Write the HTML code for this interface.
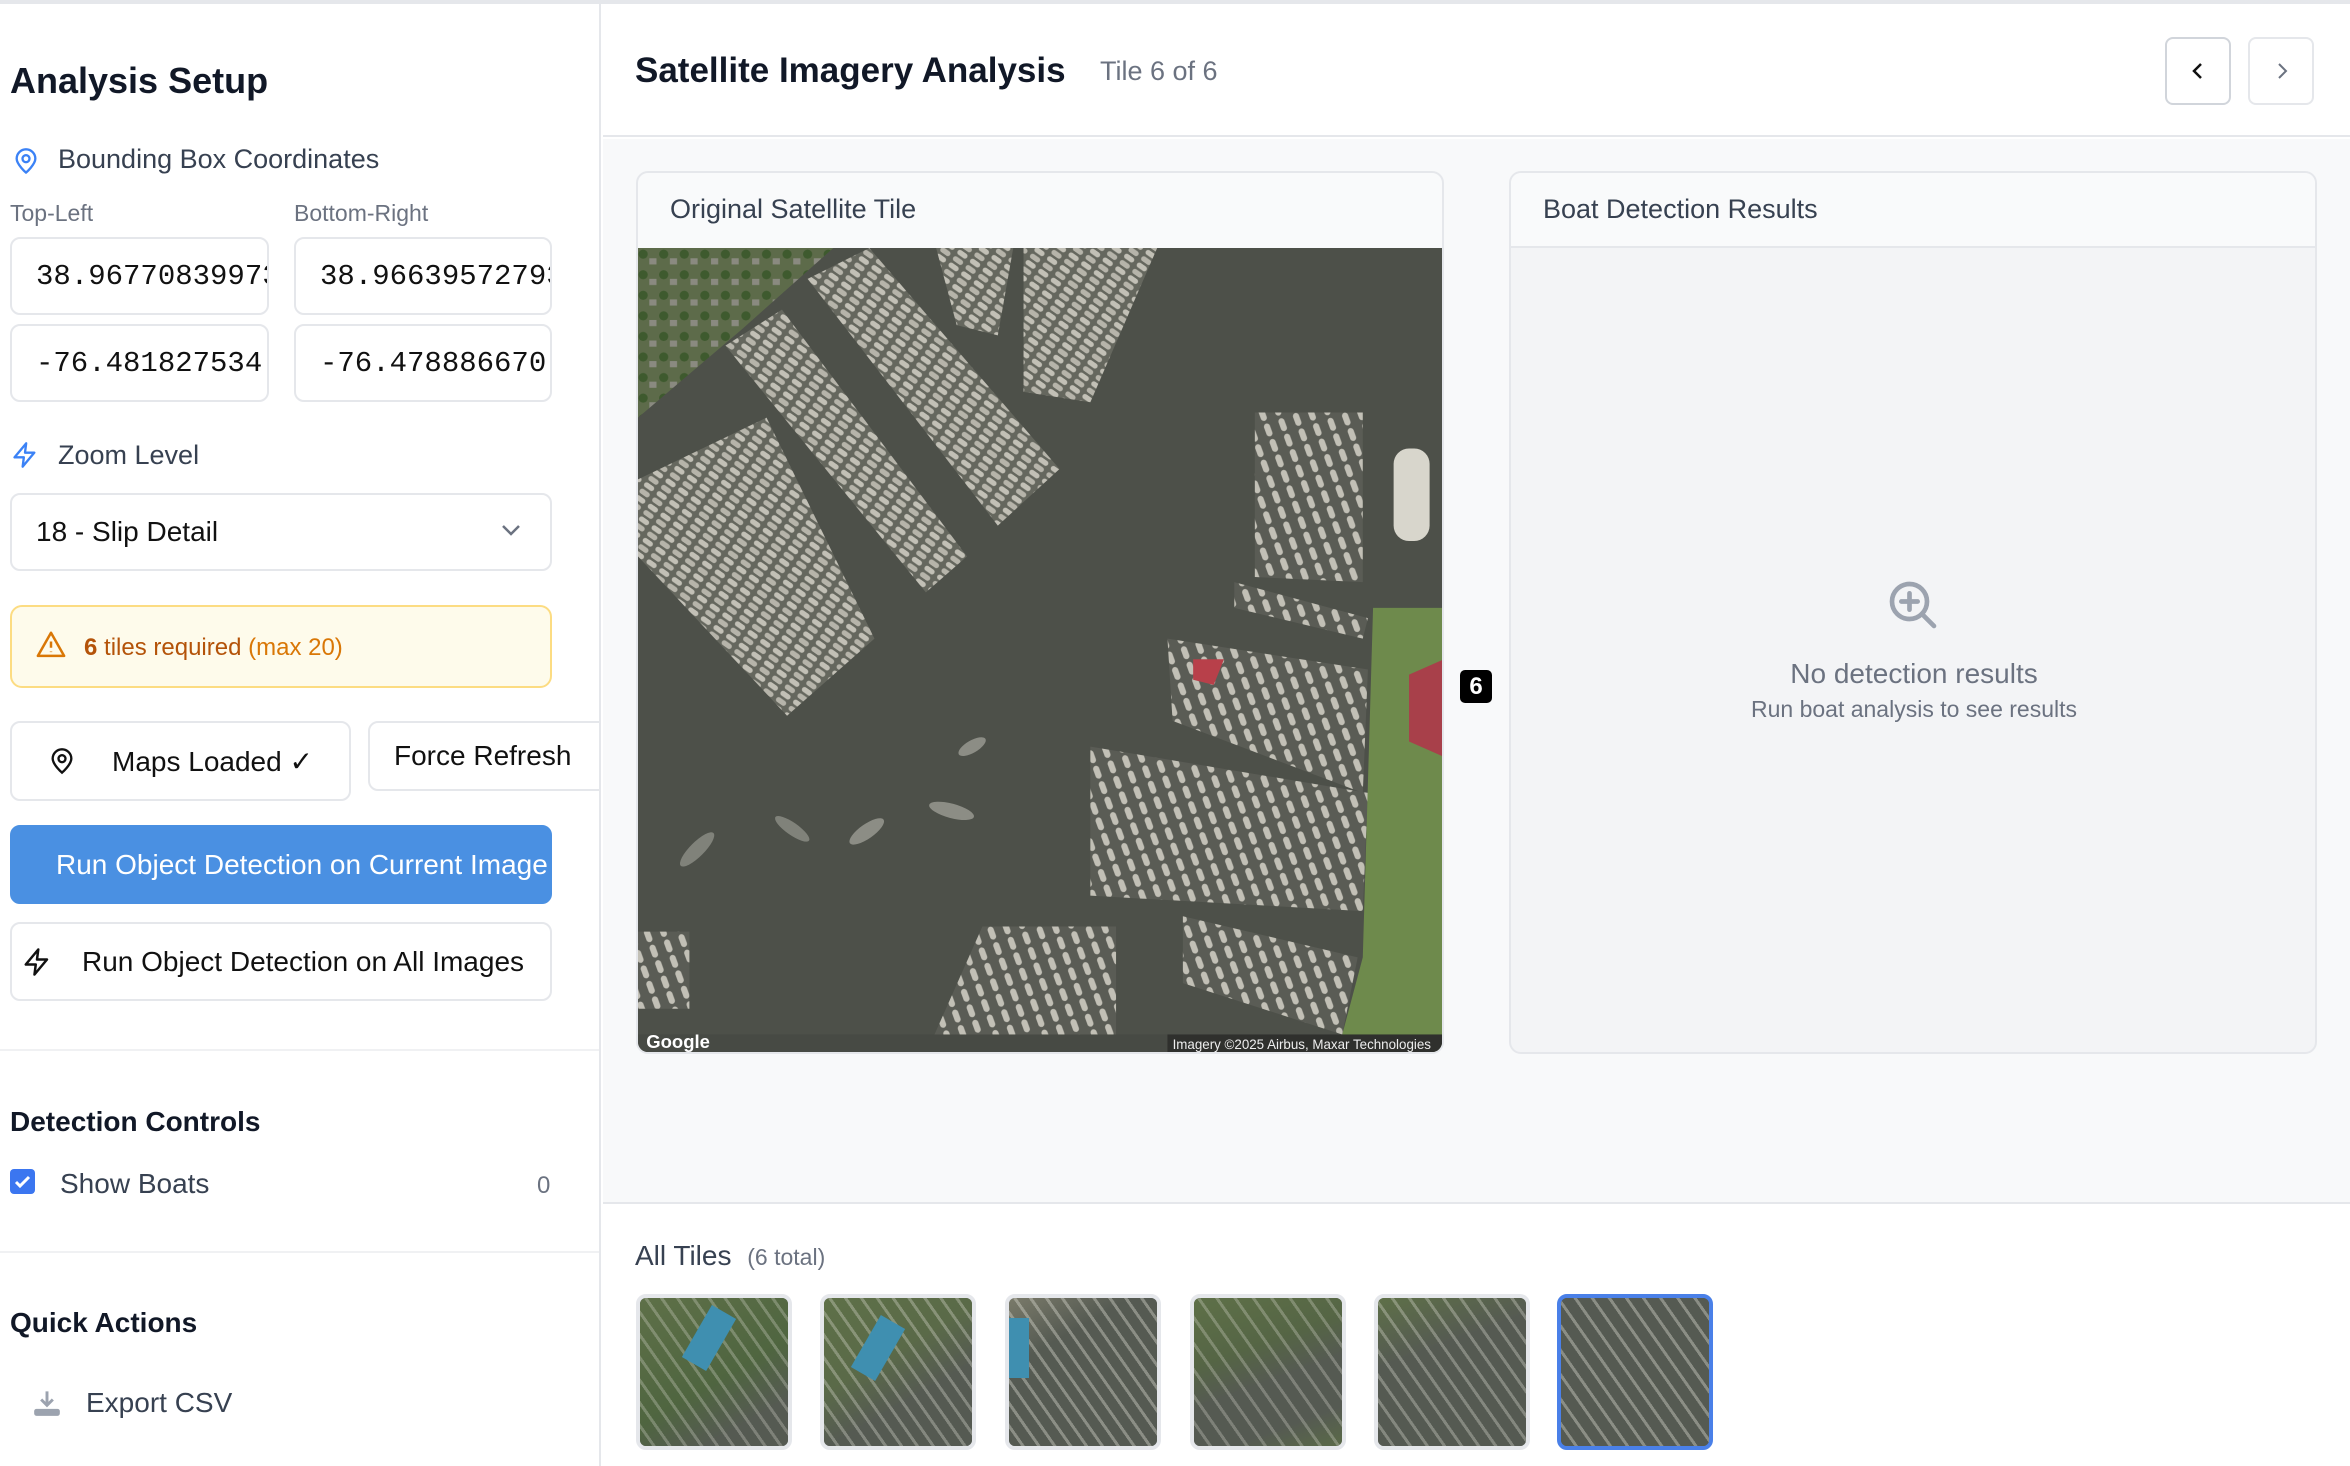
<!DOCTYPE html>
<html><head><meta charset="utf-8">
<style>
*{box-sizing:border-box;margin:0;padding:0}
body{width:2350px;height:1466px;overflow:hidden;background:#fff;font-family:"Liberation Sans",sans-serif;position:relative;color:#111827}
.abs{position:absolute}
.topline{left:0;top:0;width:2350px;height:4px;background:#e5e7eb}
.side{left:0;top:4px;width:601px;height:1462px;background:#fff;border-right:2px solid #e5e7eb;overflow:hidden}
.t{position:absolute;white-space:nowrap;line-height:1}
.inp{position:absolute;border:2px solid #e5e7eb;border-radius:10px;background:#fff;overflow:hidden;font-family:"Liberation Mono",monospace;font-size:29px;color:#111;padding-left:24px;display:flex;align-items:center;white-space:nowrap}
.btn{position:absolute;border:2px solid #e5e7eb;border-radius:10px;background:#fff;display:flex;align-items:center;white-space:nowrap;overflow:hidden;font-size:28px;color:#111}
.main{left:603px;top:4px;width:1747px;height:1462px}
.card{position:absolute;border:2px solid #e5e7eb;border-radius:12px;background:#f9fafb;overflow:hidden}
.thumb{position:absolute;top:1294px;width:156px;height:156px;border:4px solid #e5e7eb;border-radius:10px;overflow:hidden;background:#555a52}
.thumb .in{position:absolute;inset:0}
</style></head><body>
<div class="abs topline"></div>
<div class="abs side">
  <div class="t" style="left:10px;top:59px;font-size:36px;font-weight:bold;color:#111827">Analysis Setup</div>
  <svg class="abs" style="left:12px;top:142px" width="28" height="30" viewBox="0 0 24 24" fill="none" stroke="#3b82f6" stroke-width="2" stroke-linecap="round" stroke-linejoin="round"><path d="M20 10c0 5-8 12-8 12s-8-7-8-12a8 8 0 0 1 16 0z"/><circle cx="12" cy="10" r="3"/></svg>
  <div class="t" style="left:58px;top:142px;font-size:27px;color:#374151">Bounding Box Coordinates</div>
  <div class="t" style="left:10px;top:198px;font-size:23px;color:#6b7280">Top-Left</div>
  <div class="t" style="left:294px;top:198px;font-size:23px;color:#6b7280">Bottom-Right</div>
  <div class="inp" style="left:10px;top:233px;width:259px;height:78px">38.967708399733</div>
  <div class="inp" style="left:294px;top:233px;width:258px;height:78px">38.966395727934</div>
  <div class="inp" style="left:10px;top:320px;width:259px;height:78px">-76.481827534</div>
  <div class="inp" style="left:294px;top:320px;width:258px;height:78px">-76.478886670</div>
  <svg class="abs" style="left:11px;top:436px" width="28" height="30" viewBox="0 0 24 24" fill="none" stroke="#3b82f6" stroke-width="2" stroke-linecap="round" stroke-linejoin="round"><path d="M13 2L3 14h8l-1 8 10-12h-8l1-8z"/></svg>
  <div class="t" style="left:58px;top:438px;font-size:27px;color:#374151">Zoom Level</div>
  <div class="inp" style="left:10px;top:489px;width:542px;height:78px;font-family:'Liberation Sans',sans-serif;font-size:28px">18 - Slip Detail
    <svg class="abs" style="left:488px;top:28px" width="22" height="14" viewBox="0 0 22 14" fill="none" stroke="#6b7280" stroke-width="2.5"><path d="M3 3l8 8 8-8"/></svg></div>
  <div class="abs" style="left:10px;top:601px;width:542px;height:83px;background:#fefbeb;border:2px solid #fcdc82;border-radius:12px"></div>
  <svg class="abs" style="left:36px;top:626px" width="30" height="28" viewBox="0 0 24 22" fill="none" stroke="#d97706" stroke-width="2" stroke-linejoin="round"><path d="M12 2L1.5 20.5h21z"/><path d="M12 9v5M12 17v.5"/></svg>
  <div class="t" style="left:84px;top:632px;font-size:24px;color:#b45309"><b>6</b> tiles required <span style="color:#d97706">(max 20)</span></div>
  <div class="btn" style="left:10px;top:717px;width:341px;height:80px;padding-left:36px">
    <svg width="28" height="30" viewBox="0 0 24 24" fill="none" stroke="#111" stroke-width="2" stroke-linecap="round"><path d="M20 10c0 5-8 12-8 12s-8-7-8-12a8 8 0 0 1 16 0z"/><circle cx="12" cy="10" r="3"/></svg>
    <span style="margin-left:36px">Maps Loaded ✓</span></div>
  <div class="btn" style="left:368px;top:717px;width:240px;height:70px;padding-left:24px">Force Refresh</div>
  <div class="btn" style="left:10px;top:821px;width:542px;height:79px;background:#4a90e2;border-color:#4a90e2;color:#fff;padding-left:44px;font-size:28px">Run Object Detection on Current Image</div>
  <div class="btn" style="left:10px;top:918px;width:542px;height:79px;padding-left:10px">
    <svg width="30" height="30" viewBox="0 0 24 24" fill="none" stroke="#111" stroke-width="2" stroke-linejoin="round"><path d="M13 2L3 14h8l-1 8 10-12h-8l1-8z"/></svg>
    <span style="margin-left:30px">Run Object Detection on All Images</span></div>
  <div class="abs" style="left:0;top:1045px;width:601px;height:2px;background:#f0f1f3"></div>
  <div class="t" style="left:10px;top:1104px;font-size:28px;font-weight:bold;color:#111827">Detection Controls</div>
  <div class="abs" style="left:10px;top:1165px;width:25px;height:25px;background:#3b76f0;border-radius:4px"></div>
  <svg class="abs" style="left:12px;top:1167px" width="21" height="21" viewBox="0 0 21 21" fill="none" stroke="#fff" stroke-width="3"><path d="M4 11l4 4 9-9"/></svg>
  <div class="t" style="left:60px;top:1166px;font-size:28px;color:#374151">Show Boats</div>
  <div class="t" style="left:537px;top:1170px;font-size:24px;color:#6b7280">0</div>
  <div class="abs" style="left:0;top:1247px;width:601px;height:2px;background:#f0f1f3"></div>
  <div class="t" style="left:10px;top:1305px;font-size:28px;font-weight:bold;color:#111827">Quick Actions</div>
  <svg class="abs" style="left:33px;top:1385px" width="28" height="28" viewBox="0 0 24 24"><path d="M12 2v12M7 9l5 5 5-5" stroke="#9ca3af" stroke-width="2.5" fill="none"/><rect x="1" y="17" width="22" height="6" rx="2" fill="#9ca3af"/></svg>
  <div class="t" style="left:86px;top:1385px;font-size:28px;color:#374151">Export CSV</div>
</div>

<div class="abs main">
  <div class="abs" style="left:0;top:0;width:1747px;height:133px;background:#fff;border-bottom:2px solid #e5e7eb"></div>
  <div class="t" style="left:32px;top:49px;font-size:35px;font-weight:bold;color:#111827">Satellite Imagery Analysis</div>
  <div class="t" style="left:497px;top:54px;font-size:27px;color:#6b7280">Tile 6 of 6</div>
  <div class="abs" style="left:1562px;top:33px;width:66px;height:68px;border:2px solid #d1d5db;border-radius:8px;background:#fff"></div>
  <svg class="abs" style="left:1586px;top:57px" width="18" height="20" viewBox="0 0 18 20" fill="none" stroke="#111" stroke-width="2.5"><path d="M12 3l-7 7 7 7"/></svg>
  <div class="abs" style="left:1645px;top:33px;width:66px;height:68px;border:2px solid #e5e7eb;border-radius:8px;background:#fff"></div>
  <svg class="abs" style="left:1670px;top:57px" width="18" height="20" viewBox="0 0 18 20" fill="none" stroke="#6b7280" stroke-width="2"><path d="M6 3l7 7-7 7"/></svg>
  <div class="abs" style="left:0;top:135px;width:1747px;height:1065px;background:#f8f9fa;border-bottom:2px solid #e5e7eb"></div>

  <div class="card" style="left:33px;top:167px;width:808px;height:883px">
    <div class="t" style="left:32px;top:23px;font-size:27px;color:#374151">Original Satellite Tile</div>
    <svg class="abs" style="left:0;top:75px" width="806" height="806" viewBox="0 0 1568 1568" preserveAspectRatio="none">
      <defs>
        <pattern id="b" width="30" height="30" patternUnits="userSpaceOnUse" patternTransform="rotate(35)">
          <rect width="30" height="30" fill="#65675e"/><rect x="3" y="3" width="22" height="10" rx="5" fill="#c2c0b6"/><rect x="3" y="18" width="22" height="10" rx="5" fill="#b6b4aa"/>
        </pattern>
        <pattern id="b2" width="30" height="32" patternUnits="userSpaceOnUse" patternTransform="rotate(-20)">
          <rect width="30" height="32" fill="#5a5c55"/><rect x="5" y="3" width="12" height="26" rx="6" fill="#c2c0b6"/>
        </pattern>
        <pattern id="land" width="40" height="40" patternUnits="userSpaceOnUse">
          <rect width="40" height="40" fill="#5d6b4a"/><circle cx="10" cy="12" r="9" fill="#3e5a2e"/><rect x="22" y="20" width="14" height="12" fill="#8a8a80"/>
        </pattern>
      </defs>
      <rect width="1568" height="1568" fill="#4d5049"/>
      <polygon points="0,0 380,0 200,160 0,330" fill="url(#land)"/>
      <polygon points="330,60 450,0 820,430 700,540" fill="url(#b)"/>
      <polygon points="170,190 280,120 640,600 560,670" fill="url(#b)"/>
      <polygon points="0,450 250,330 460,760 290,910 0,600" fill="url(#b)"/>
      <polygon points="580,0 730,0 700,170 620,150" fill="url(#b)"/>
      <polygon points="750,0 1010,0 880,300 750,280" fill="url(#b)"/>
      <polygon points="1200,320 1410,320 1410,650 1200,640" fill="url(#b2)"/>
      <polygon points="1160,650 1420,720 1410,760 1160,700" fill="url(#b2)"/>
      <polygon points="1030,760 1420,820 1410,1060 1040,920" fill="url(#b2)"/>
      <polygon points="880,970 1420,1060 1410,1290 880,1260" fill="url(#b2)"/>
      <polygon points="670,1320 930,1320 930,1568 560,1568" fill="url(#b2)"/>
      <polygon points="1060,1300 1400,1380 1370,1530 1060,1430" fill="url(#b2)"/>
      <polygon points="0,1330 100,1330 100,1480 0,1480" fill="url(#b2)"/>
      <polygon points="1430,700 1568,700 1568,1568 1360,1568 1410,1380" fill="#6e8a4c"/>
      <rect x="1470" y="390" width="70" height="180" rx="30" fill="#d8d6cc"/>
      <polygon points="1500,830 1568,800 1568,990 1500,960" fill="#a8404a"/>
      <polygon points="1080,800 1140,800 1120,850 1080,840" fill="#b8404a"/>
      <ellipse cx="650" cy="970" rx="30" ry="12" fill="#8c8d85" transform="rotate(-30 650 970)"/>
      <ellipse cx="610" cy="1095" rx="45" ry="14" fill="#8c8d85" transform="rotate(15 610 1095)"/>
      <ellipse cx="445" cy="1135" rx="40" ry="14" fill="#8c8d85" transform="rotate(-35 445 1135)"/>
      <ellipse cx="300" cy="1130" rx="40" ry="12" fill="#80827a" transform="rotate(35 300 1130)"/>
      <ellipse cx="115" cy="1170" rx="45" ry="14" fill="#80827a" transform="rotate(-45 115 1170)"/>
      <rect x="0" y="1530" width="1568" height="38" fill="#474a44"/>
      <rect x="1030" y="1530" width="538" height="38" fill="#2f302d"/>
      <text x="16" y="1556" font-family="Liberation Sans" font-size="36" font-weight="bold" fill="#fff">Google</text>
      <text x="1040" y="1558" font-family="Liberation Sans" font-size="26" fill="#eee">Imagery ©2025 Airbus, Maxar Technologies</text>
    </svg>
  </div>
  <div class="abs" style="left:857px;top:666px;width:32px;height:33px;background:#000;border-radius:5px;color:#fff;font-size:24px;font-weight:bold;text-align:center;line-height:33px">6</div>

  <div class="card" style="left:906px;top:167px;width:808px;height:883px;background:#f3f4f6">
    <div class="abs" style="left:0;top:0;width:806px;height:75px;background:#f9fafb;border-bottom:2px solid #e5e7eb"></div>
    <div class="t" style="left:32px;top:23px;font-size:27px;color:#374151">Boat Detection Results</div>
    <svg class="abs" style="left:374px;top:404px" width="56" height="56" viewBox="0 0 24 24" fill="none" stroke="#9ca3af" stroke-width="2" stroke-linecap="round"><circle cx="10.5" cy="10.5" r="7.5"/><path d="M21 21l-5.2-5.2M10.5 7v7M7 10.5h7"/></svg>
    <div class="t" style="left:0;width:806px;text-align:center;top:487px;font-size:28px;color:#6b7280">No detection results</div>
    <div class="t" style="left:0;width:806px;text-align:center;top:525px;font-size:23px;color:#6b7280">Run boat analysis to see results</div>
  </div>

  <div class="t" style="left:32px;top:1238px;font-size:28px;color:#374151">All Tiles <span style="font-size:23px;color:#6b7280;margin-left:8px">(6 total)</span></div>
</div>

<div class="thumb" style="left:636px"><div class="in" style="background:repeating-linear-gradient(55deg,rgba(220,220,210,.0) 0 10px,rgba(220,220,210,.3) 10px 13px),linear-gradient(150deg,#5e7048 0%,#4f6540 55%,#555a52 80%)"></div><div class="abs" style="left:55px;top:10px;width:28px;height:60px;background:#3f8fb0;transform:rotate(30deg)"></div></div>
<div class="thumb" style="left:820px"><div class="in" style="background:repeating-linear-gradient(55deg,rgba(220,220,210,0) 0 10px,rgba(220,220,210,.35) 10px 13px),linear-gradient(150deg,#5e7048 0%,#5a6a48 40%,#555a52 65%)"></div><div class="abs" style="left:40px;top:20px;width:28px;height:60px;background:#3f8fb0;transform:rotate(30deg)"></div></div>
<div class="thumb" style="left:1005px"><div class="in" style="background:repeating-linear-gradient(55deg,rgba(220,220,210,0) 0 10px,rgba(220,220,210,.4) 10px 13px),linear-gradient(150deg,#7a7a6a 0%,#555a52 30%,#555a52 100%)"></div><div class="abs" style="left:0;top:20px;width:20px;height:60px;background:#3f8fb0"></div></div>
<div class="thumb" style="left:1190px"><div class="in" style="background:repeating-linear-gradient(55deg,rgba(220,220,210,0) 0 12px,rgba(220,220,210,.3) 12px 15px),linear-gradient(160deg,#5e7048 0%,#556545 35%,#555a52 55%,#555a52 80%,#5a6a48 100%)"></div></div>
<div class="thumb" style="left:1374px"><div class="in" style="background:repeating-linear-gradient(55deg,rgba(220,220,210,0) 0 11px,rgba(220,220,210,.35) 11px 14px),linear-gradient(160deg,#5e7048 0%,#555a52 35%,#555a52 100%)"></div></div>
<div class="thumb" style="left:1557px;border-color:#4a80e8"><div class="in" style="background:repeating-linear-gradient(55deg,rgba(220,220,210,0) 0 11px,rgba(220,220,210,.4) 11px 14px),#555a52"></div></div>
</body></html>
